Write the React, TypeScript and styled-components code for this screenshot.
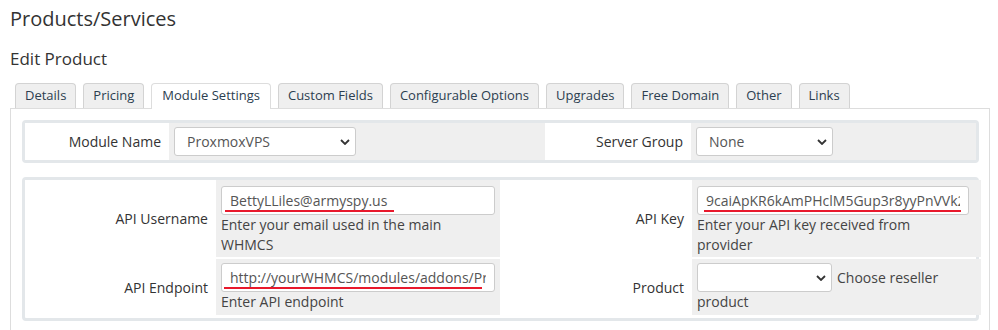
import React from "react";
import styled, { createGlobalStyle } from "styled-components";

const GlobalStyle = createGlobalStyle`
  html, body { margin: 0; padding: 0; background: #fff; }
  body { font-family: "Open Sans", "Liberation Sans", sans-serif; color: #333; }
  * { box-sizing: border-box; }
`;

const Page = styled.div`
  padding: 0 8px 0 10px;
  width: 998px;
`;

const Title = styled.h1`
  margin: 5px 0 0 0;
  font-size: 20px;
  line-height: 27px;
  font-weight: 400;
  color: #333;
`;

const SubTitle = styled.h2`
  margin: 15px 0 0 0;
  font-size: 17px;
  line-height: 23px;
  font-weight: 400;
  color: #333;
`;

const TabList = styled.div`
  display: flex;
  align-items: flex-start;
  gap: 7px;
  padding-left: 5px;
  margin-top: 13px;
  margin-bottom: -1px;
  position: relative;
  z-index: 1;
`;

const Tab = styled.div<{ $active?: boolean }>`
  height: ${(p) => (p.$active ? 26 : 25)}px;
  padding: 0 ${(p) => (p.$active ? 10 : 9)}px;
  border: 1px solid ${(p) => (p.$active ? "#ddd" : "#d3d3d3")};
  border-bottom: none;
  border-radius: 4px 4px 0 0;
  background: ${(p) => (p.$active ? "#fff" : "#efefef")};
  font-size: 13px;
  line-height: 23px;
  color: #2c3e50;
  white-space: nowrap;
`;

const Panel = styled.div`
  border: 1px solid #ddd;
  border-bottom: none;
  padding: 11px 10px 10px 11px;
`;

const FormTable = styled.div<{ $cols: string; $padBottom?: number }>`
  display: grid;
  grid-template-columns: ${(p) => p.$cols};
  column-gap: 2px;
  row-gap: 2px;
  border: 3px solid #e3e7ea;
  border-radius: 4px;
  padding-bottom: ${(p) => p.$padBottom || 0}px;
  & + & {
    margin-top: 14px;
  }
`;

const Label = styled.div`
  background: #fff;
  display: flex;
  align-items: center;
  justify-content: flex-end;
  padding-right: 6px;
  font-size: 14px;
  color: #333;
`;

const Field = styled.div<{ $pad?: string }>`
  background: #efefef;
  padding: ${(p) => p.$pad || "4px 5px"};
  font-size: 14px;
  line-height: 20px;
  color: #444;
`;

const SelectWrap = styled.span<{ $w: number }>`
  position: relative;
  display: inline-block;
  width: ${(p) => p.$w}px;
  height: 29px;
  vertical-align: middle;
`;

const Select = styled.select`
  appearance: none;
  -webkit-appearance: none;
  width: 100%;
  height: 29px;
  border: 1px solid #ccc;
  border-radius: 3px;
  background: #fff;
  padding: 0 24px 0 12px;
  font-family: "Open Sans", "Liberation Sans", sans-serif;
  font-size: 14px;
  color: #555;
  outline: none;
`;

const Chevron = styled.svg`
  position: absolute;
  right: 6px;
  top: 12px;
  pointer-events: none;
`;

const InputWrap = styled.div<{ $w: number }>`
  position: relative;
  width: ${(p) => p.$w}px;
  height: 29px;
`;

const Input = styled.input`
  width: 100%;
  height: 29px;
  border: 1px solid #ccc;
  border-radius: 3px;
  background: #fff;
  padding: 0 8px;
  font-family: "Open Sans", "Liberation Sans", sans-serif;
  font-size: 14px;
  color: #555;
  outline: none;
`;

const Mark = styled.span<{ $left: number; $width: number }>`
  position: absolute;
  left: ${(p) => p.$left}px;
  width: ${(p) => p.$width}px;
  bottom: 3px;
  height: 2px;
  background: #e8192c;
`;

const Desc = styled.div`
  font-size: 14px;
  line-height: 20px;
  color: #444;
`;

const InlineNote = styled.span`
  margin-left: 5px;
  vertical-align: middle;
`;

const ChevronIcon = () => (
  <Chevron width="10" height="6" viewBox="0 0 10 6">
    <path d="M1 1 L5 5 L9 1" fill="none" stroke="#333" strokeWidth="1.8" />
  </Chevron>
);

const Dropdown = ({ w, value }: { w: number; value: string }) => (
  <SelectWrap $w={w}>
    <Select defaultValue={value}>
      <option value={value}>{value}</option>
    </Select>
    <ChevronIcon />
  </SelectWrap>
);

const TextField = ({
  w,
  value,
  markLeft,
  markWidth,
}: {
  w: number;
  value: string;
  markLeft: number;
  markWidth: number;
}) => (
  <InputWrap $w={w}>
    <Input readOnly value={value} />
    <Mark $left={markLeft} $width={markWidth} />
  </InputWrap>
);

const tabs = [
  "Details",
  "Pricing",
  "Module Settings",
  "Custom Fields",
  "Configurable Options",
  "Upgrades",
  "Free Domain",
  "Other",
  "Links",
];

export default function App() {
  return (
    <>
      <GlobalStyle />
      <Page>
        <Title>Products/Services</Title>
        <SubTitle>Edit Product</SubTitle>
        <TabList>
          {tabs.map((t) => (
            <Tab key={t} $active={t === "Module Settings"}>
              {t}
            </Tab>
          ))}
        </TabList>
        <Panel>
          <FormTable $cols="142px 376px 142px 1fr">
            <Label>Module Name</Label>
            <Field>
              <Dropdown w={182} value="ProxmoxVPS" />
            </Field>
            <Label>Server Group</Label>
            <Field>
              <Dropdown w={137} value="None" />
            </Field>
          </FormTable>
          <FormTable $cols="189px 284px 188px 1fr" $padBottom={3}>
            <Label>API Username</Label>
            <Field $pad="6px 5px 2px">
              <TextField
                w={274}
                value="BettyLLiles@armyspy.us"
                markLeft={4}
                markWidth={169}
              />
              <Desc>Enter your email used in the main WHMCS</Desc>
            </Field>
            <Label>API Key</Label>
            <Field $pad="6px 12px 2px 5px">
              <TextField
                w={272}
                value="9caiApKR6kAmPHclM5Gup3r8yyPnVVk2xQ7"
                markLeft={7}
                markWidth={257}
              />
              <Desc>Enter your API key received from provider</Desc>
            </Field>
            <Label>API Endpoint</Label>
            <Field $pad="4px 5px 3px">
              <TextField
                w={274}
                value="http://yourWHMCS/modules/addons/ProxmoxAddon/api"
                markLeft={3}
                markWidth={258}
              />
              <Desc>Enter API endpoint</Desc>
            </Field>
            <Label>Product</Label>
            <Field $pad="4px 5px 3px">
              <Dropdown w={135} value="" />
              <InlineNote>Choose reseller</InlineNote> product
            </Field>
          </FormTable>
        </Panel>
      </Page>
    </>
  );
}
